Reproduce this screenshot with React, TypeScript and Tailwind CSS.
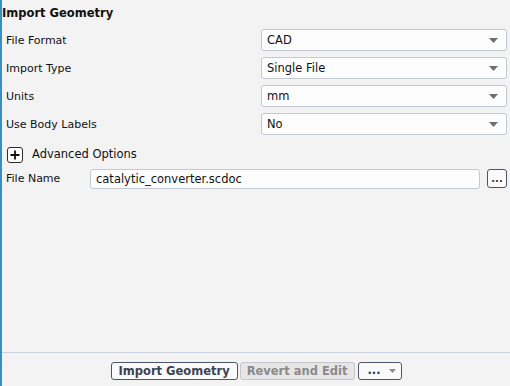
const font = { fontFamily: '"DejaVu Sans", Verdana, sans-serif' };

function Caret() {
  return (
    <svg width="9" height="5" viewBox="0 0 9 5" className="shrink-0">
      <path d="M0 0h9L4.5 5z" fill="#6e6e6e" />
    </svg>
  );
}

function Select({ value }: { value: string }) {
  return (
    <div className="flex h-[22px] w-[246px] items-center justify-between rounded-[3px] border border-[#c3c9d2] bg-[#fdfdfd] pl-[5px] pr-[8px] text-[11.5px] text-[#111]">
      <span className="pt-[2px]">{value}</span>
      <Caret />
    </div>
  );
}

const rows = [
  { label: 'File Format', value: 'CAD' },
  { label: 'Import Type', value: 'Single File' },
  { label: 'Units', value: 'mm' },
  { label: 'Use Body Labels', value: 'No' },
];

export default function App() {
  return (
    <div className="flex h-[386px] w-[510px] flex-col border-l-2 border-[#3a8fc2] bg-[#f3f3f3] text-[#111]" style={font}>
      <div className="flex-1">
        <div className="flex h-[26px] items-center pt-[2px] text-[11.5px] font-bold">Import Geometry</div>

        {rows.map((r) => (
          <div key={r.label} className="flex h-[28px] items-center">
            <div className="w-[259px] pl-[4px] pt-[3px] text-[11px]">{r.label}</div>
            <Select value={r.value} />
          </div>
        ))}

        <div className="flex h-[30px] items-center pl-[5px] pt-[3px]">
          <div className="flex h-[16px] w-[16px] items-center justify-center rounded-[3px] border-[1.5px] border-[#2b2b2b] bg-white">
            <svg width="10" height="10" viewBox="0 0 10 10">
              <path d="M5 0.5v9M0.5 5h9" stroke="#111" strokeWidth="1.8" />
            </svg>
          </div>
          <span className="ml-[9px] pt-[1px] text-[11.5px]">Advanced Options</span>
        </div>

        <div className="flex h-[21px] items-center">
          <div className="w-[88px] pl-[4px] pt-[2px] text-[11px]">File Name</div>
          <div className="flex h-[20px] w-[390px] items-center rounded-[3px] border border-[#c3c9d2] bg-[#fdfdfd] pl-[5px] pt-[2px] text-[11.5px]">
            catalytic_converter.scdoc
          </div>
          <div className="ml-[7px] flex h-[19px] w-[20px] items-end justify-center rounded-[3px] border border-[#4d5566] bg-[#fafafa] pb-[3px] text-[10px] font-bold leading-none text-[#2a3a55]">
            ...
          </div>
        </div>
      </div>

      <div className="flex h-[34px] justify-center border-t border-[#cdd3e3] pt-[9px]">
        <div className="flex h-[18px] gap-[2px]">
          <div className="flex items-center rounded-[3px] border border-[#4d5566] bg-[#fafafa] px-[7px] pt-[1px] text-[11.5px] font-bold text-[#3c4352]">
            Import Geometry
          </div>
          <div className="flex items-center rounded-[3px] border border-[#c6c6c6] bg-[#e6e6e6] px-[6px] pt-[1px] text-[11.5px] font-bold text-[#8a8a8a]">
            Revert and Edit
          </div>
          <div className="ml-[1px] flex w-[44px] items-center justify-between rounded-[3px] border border-[#4d5566] bg-[#fafafa] pl-[9px] pr-[5px] text-[11.5px] font-bold text-[#2a3a55]">
            <span className="leading-none">...</span>
            <svg width="7" height="4" viewBox="0 0 7 4">
              <path d="M0 0h7L3.5 4z" fill="#8a8a8a" />
            </svg>
          </div>
        </div>
      </div>
    </div>
  );
}
